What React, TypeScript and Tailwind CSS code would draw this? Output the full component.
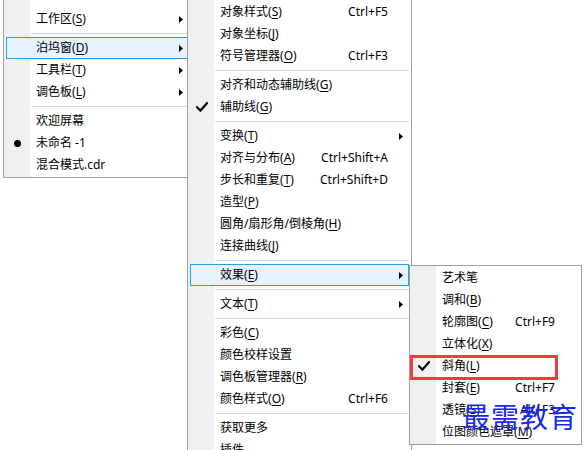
import React from "react";

type Item =
  | { sep: true }
  | {
      sep?: false;
      label: string;
      mn?: string;
      shortcut?: string;
      arrow?: boolean;
      check?: boolean;
      bullet?: boolean;
      hl?: boolean;
    };

const Check = () => (
  <svg width="12" height="10" viewBox="0 0 12 10" className="block">
    <path d="M1 5.2 L4.4 8.6 L11 1.2" fill="none" stroke="#000" strokeWidth="2.2" strokeLinecap="square" />
  </svg>
);

const Arrow = () => (
  <svg width="4" height="7" viewBox="0 0 4 7" className="block">
    <polygon points="0,0 4,3.5 0,7" fill="#000" />
  </svg>
);

function Row({ it, trail }: { it: Exclude<Item, { sep: true }>; trail: string }) {
  return (
    <div
      className={`flex h-[22px] items-center border ${
        it.hl ? "border-[#26a0e6] bg-[#e5f3ff]" : "border-transparent"
      }`}
    >
      <div className="flex w-[21px] shrink-0 items-center justify-center">
        {it.check ? <Check /> : null}
        {it.bullet ? <div className="h-[7px] w-[7px] rounded-full bg-black" /> : null}
      </div>
      <span className="ml-[8px] whitespace-nowrap leading-none">
        {it.label}
        {it.mn ? (
          <>
            (<span className="underline underline-offset-2">{it.mn}</span>)
          </>
        ) : null}
      </span>
      <span className="ml-auto whitespace-nowrap leading-none">{it.shortcut ?? ""}</span>
      <div className={`flex ${trail} shrink-0 items-center justify-end pr-[5px]`}>
        {it.arrow ? <Arrow /> : null}
      </div>
    </div>
  );
}

function Sep() {
  return (
    <div className="flex h-[7px] items-center pl-[25px]">
      <div className="h-px w-full bg-[#d7d7d7]" />
    </div>
  );
}

function Menu({ items, className, trail = "w-[20px]" }: { items: Item[]; className: string; trail?: string }) {
  return (
    <div
      className={`absolute border border-[#a0a0a0] bg-[linear-gradient(to_right,#f0f0f0_26px,#ffffff_26px)] px-[2px] ${className}`}
    >
      {items.map((it, i) => (it.sep ? <Sep key={i} /> : <Row key={i} it={it} trail={trail} />))}
    </div>
  );
}

const menu1: Item[] = [
  { label: "工作区", mn: "S", arrow: true },
  { sep: true },
  { label: "泊坞窗", mn: "D", arrow: true, hl: true },
  { label: "工具栏", mn: "T", arrow: true },
  { label: "调色板", mn: "L", arrow: true },
  { sep: true },
  { label: "欢迎屏幕" },
  { label: "未命名 -1", bullet: true },
  { label: "混合模式.cdr" },
];

const menu2: Item[] = [
  { label: "对象样式", mn: "S", shortcut: "Ctrl+F5" },
  { label: "对象坐标", mn: "J" },
  { label: "符号管理器", mn: "O", shortcut: "Ctrl+F3" },
  { sep: true },
  { label: "对齐和动态辅助线", mn: "G" },
  { label: "辅助线", mn: "G", check: true },
  { sep: true },
  { label: "变换", mn: "T", arrow: true },
  { label: "对齐与分布", mn: "A", shortcut: "Ctrl+Shift+A" },
  { label: "步长和重复", mn: "T", shortcut: "Ctrl+Shift+D" },
  { label: "造型", mn: "P" },
  { label: "圆角/扇形角/倒棱角", mn: "H" },
  { label: "连接曲线", mn: "J" },
  { sep: true },
  { label: "效果", mn: "E", arrow: true, hl: true },
  { sep: true },
  { label: "文本", mn: "T", arrow: true },
  { sep: true },
  { label: "彩色", mn: "C" },
  { label: "颜色校样设置" },
  { label: "调色板管理器", mn: "R" },
  { label: "颜色样式", mn: "O", shortcut: "Ctrl+F6" },
  { sep: true },
  { label: "获取更多" },
  { label: "插件" },
];

const menu3: Item[] = [
  { label: "艺术笔" },
  { label: "调和", mn: "B" },
  { label: "轮廓图", mn: "C", shortcut: "Ctrl+F9" },
  { label: "立体化", mn: "X" },
  { label: "斜角", mn: "L", check: true },
  { label: "封套", mn: "E", shortcut: "Ctrl+F7" },
  { label: "透镜", mn: "S", shortcut: "Alt+F3" },
  { label: "位图颜色遮罩", mn: "M" },
];

export default function App() {
  return (
    <div className="relative h-[450px] w-[586px] overflow-hidden bg-white font-['Noto_Sans','Noto_Sans_CJK_SC',sans-serif] text-[12px] text-black">
      <Menu items={menu1} className="left-[3px] top-[-2px] w-[189px] pt-[9px] pb-[1px]" />
      <Menu items={menu2} className="left-[187px] top-[-3px] w-[225px] pt-[3px] pb-[3px]" />
      <Menu items={menu3} className="left-[409px] top-[265px] w-[173px] pt-[1px] pb-[1px]" trail="w-[23px]" />
      <div className="absolute left-[410px] top-[355px] h-[25px] w-[148px] border-[3px] border-[#f03c3c]" />
      <div className="absolute left-[462px] top-[402px] whitespace-nowrap font-['Noto_Sans_CJK_SC',sans-serif] text-[28px] font-normal leading-none tracking-[1px] text-[#1a28e6]">
        最需教育
      </div>
    </div>
  );
}
